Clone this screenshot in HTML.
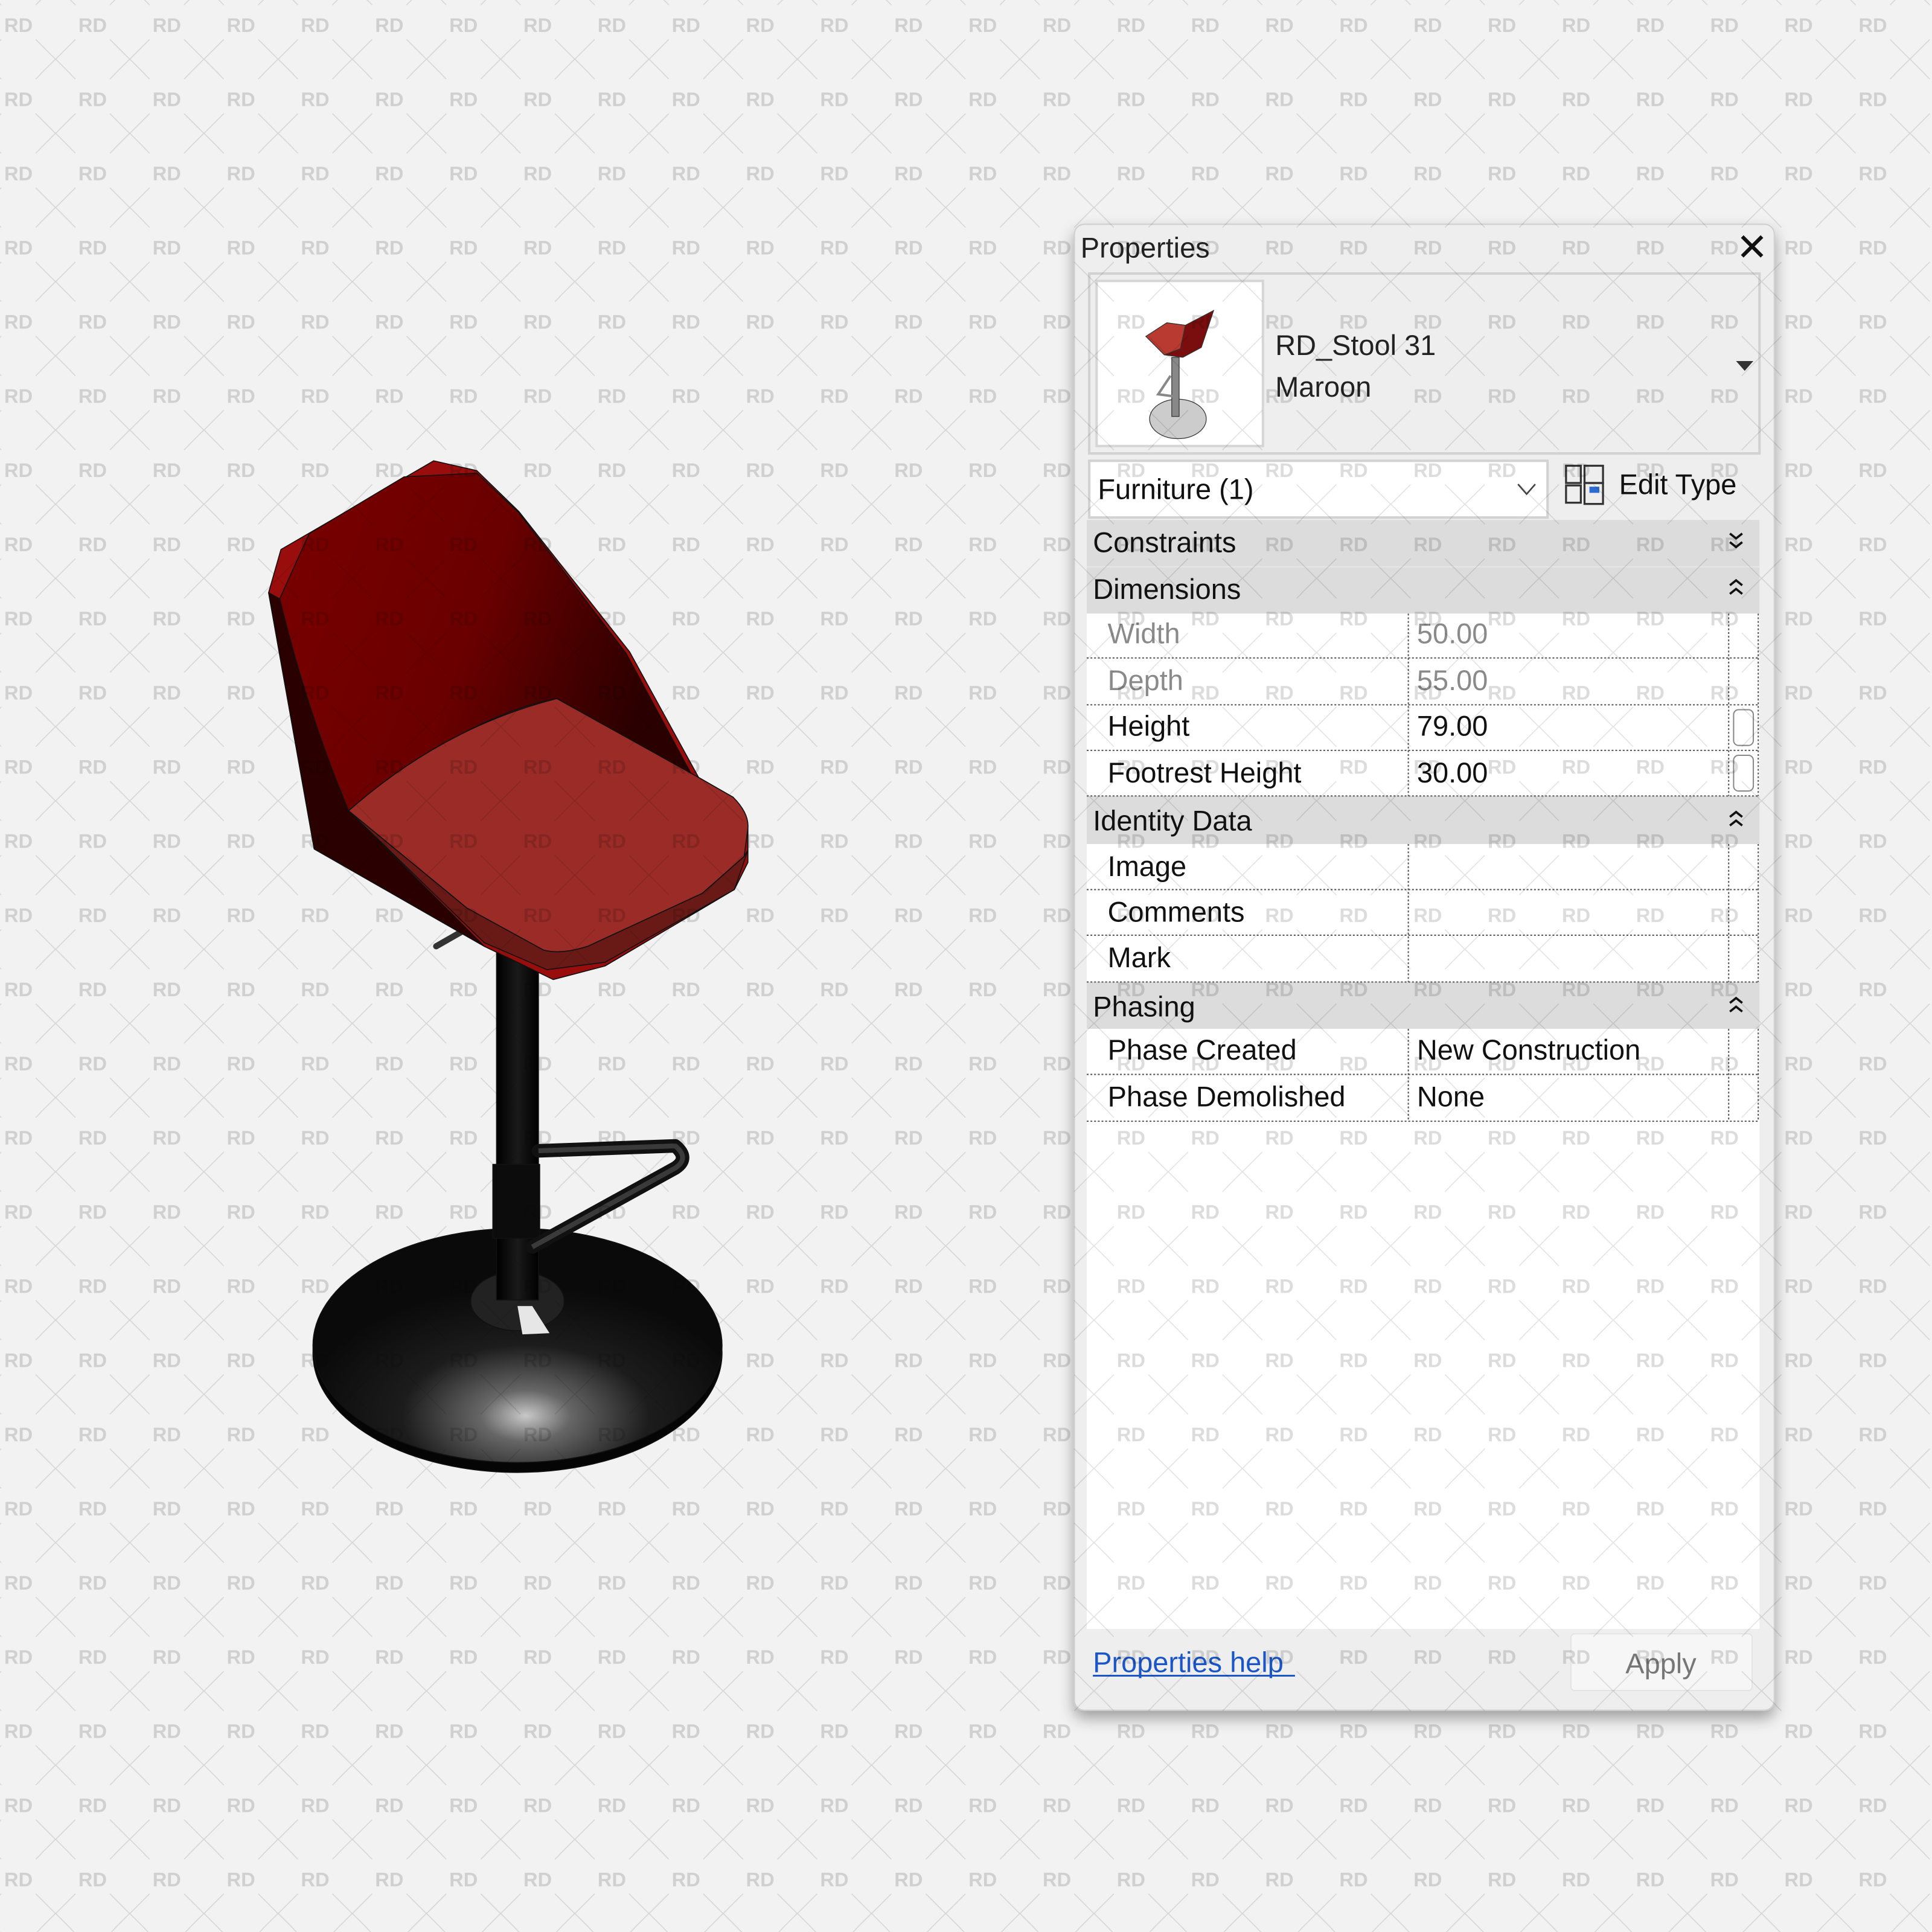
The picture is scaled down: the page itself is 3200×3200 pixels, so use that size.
<!DOCTYPE html>
<html><head><meta charset="utf-8"><style>
html,body{margin:0;padding:0;background:#f2f2f2;}
svg{display:block;}
text{font-family:"Liberation Sans","DejaVu Sans",sans-serif;}
</style></head><body>
<svg width="3200" height="3200" viewBox="0 0 3200 3200" xmlns="http://www.w3.org/2000/svg">
<defs>
<pattern id="wm" x="-15" y="0" width="60.2" height="60.2" patternUnits="userSpaceOnUse">
<text x="30" y="26" font-size="16" font-weight="bold" fill="#dcdcdc" text-anchor="middle">RD</text>
<g stroke="#e3e3e3" stroke-width="0.8">
<line x1="-16" y1="32" x2="16" y2="64"/><line x1="16" y1="32" x2="-16" y2="64"/>
<line x1="44" y1="32" x2="76" y2="64"/><line x1="76" y1="32" x2="44" y2="64"/>
<line x1="-16" y1="-28" x2="16" y2="4"/><line x1="16" y1="-28" x2="-16" y2="4"/>
<line x1="44" y1="-28" x2="76" y2="4"/><line x1="76" y1="-28" x2="44" y2="4"/>
</g>
</pattern>
<linearGradient id="shell" x1="0" y1="0" x2="1" y2="0.3"><stop offset="0" stop-color="#7a0000"/><stop offset="0.55" stop-color="#6a0000"/><stop offset="1" stop-color="#2a0000"/></linearGradient>
<linearGradient id="col" x1="0" x2="1"><stop offset="0" stop-color="#000"/><stop offset="0.5" stop-color="#1a1a1a"/><stop offset="1" stop-color="#000"/></linearGradient>
<radialGradient id="base" cx="0.52" cy="0.8" r="0.55"><stop offset="0" stop-color="#c8c8c8"/><stop offset="0.2" stop-color="#666"/><stop offset="0.55" stop-color="#1c1c1c"/><stop offset="1" stop-color="#0a0a0a"/></radialGradient>
<filter id="sh" x="-10%" y="-10%" width="120%" height="120%"><feDropShadow dx="0" dy="6" stdDeviation="6" flood-color="#000" flood-opacity="0.35"/></filter>
</defs>
<rect width="3200" height="3200" fill="#f2f2f2"/>
<g transform="scale(2.0408)">
<!-- stool -->
<g stroke="#111" stroke-width="0.8" stroke-linejoin="round">
<ellipse cx="420" cy="1098" rx="166" ry="97" fill="#050505"/>
<ellipse cx="420" cy="1092" rx="166" ry="95" fill="url(#base)"/>
<ellipse cx="420" cy="1056" rx="38" ry="24" fill="#222"/>
<path d="M420 1060 L432 1060 L446 1082 L424 1083 Z" fill="#e6e6e6" stroke="none"/>
<rect x="403" y="770" width="34" height="285" fill="url(#col)"/>
<rect x="400" y="945" width="38" height="60" fill="#0c0c0c"/>
<path d="M437 934 L548 930 Q560 940 548 948 L432 1012" fill="none" stroke="#111" stroke-width="11" stroke-linecap="round"/>
<path d="M437 934 L548 930 Q560 940 548 948 L432 1012" fill="none" stroke="#3a3a3a" stroke-width="4"/>
<line x1="354" y1="768" x2="375" y2="756" stroke="#333" stroke-width="5" stroke-linecap="round"/>
<!-- shell outer -->
<path d="M218 481 L228 446 L352 374 L387 382 L421 415 L511 529 L567 631 L595 647 L607 672 L607 700 L596 722 L491 784 L449 795 L393 768 L255 689 Z" fill="#9a0d0d"/>
<path d="M218 481 L227 486 L283 658 L393 768 L255 689 Z" fill="#2a0000"/>
<!-- inner back -->
<path d="M251 433 L328 387 L387 384 L421 416 L508 530 L562 630 L452 567 Q380 580 283 658 Q250 580 227 486 Z" fill="url(#shell)"/>
<!-- seat front -->
<path d="M283 658 L393 765 L444 787 L491 781 L596 722 L607 690 L604 695 L570 725 L477 768 L441 771 L379 737 Z" fill="#6a1a16"/>
<!-- seat top -->
<path d="M283 658 Q360 590 452 567 L567 631 L595 647 Q608 660 607 672 L604 695 L570 725 L477 768 Q455 775 441 771 L379 737 Z" fill="#9a2b26"/>
</g>
<!-- panel -->
<g filter="url(#sh)"><rect x="872" y="182" width="568" height="1206" rx="8" fill="#eeeeee" stroke="#cfcfcf"/></g>
<text x="877" y="209" font-size="23" fill="#222">Properties</text>
<path d="M1414 192 L1430 208 M1430 192 L1414 208" stroke="#111" stroke-width="3"/>
<rect x="884" y="222" width="544" height="146" fill="#eeeeee" stroke="#d2d2d2" stroke-width="2"/>
<rect x="890" y="228" width="135" height="134" fill="#fff" stroke="#d6d6d6" stroke-width="2"/>
<!-- thumb stool -->
<g stroke="#333" stroke-width="0.6">
<ellipse cx="956" cy="340" rx="23" ry="16" fill="#ccc"/>
<path d="M951 290 L957 290 L957 338 L951 338 Z" fill="#888"/>
<path d="M950 305 L940 320 L955 322" fill="none" stroke="#888" stroke-width="2"/>
<path d="M930 273 L947 262 L962 264 L985 252 L975 282 L960 290 L945 288 Z" fill="#7a0d0d"/>
<path d="M930 273 L947 262 L962 264 L958 283 L945 288 Z" fill="#b83a30"/>
</g>
<text x="1035" y="288" font-size="23" fill="#222">RD_Stool 31</text>
<text x="1035" y="322" font-size="23" fill="#222">Maroon</text>
<path d="M1409 293 L1423 293 L1416 301 Z" fill="#333"/>
<rect x="884" y="374" width="372" height="46" fill="#fff" stroke="#d2d2d2" stroke-width="2"/>
<text x="891" y="405" font-size="23" fill="#111">Furniture (1)</text>
<path d="M1232 393 L1239 401 L1246 393" fill="none" stroke="#444" stroke-width="1.3"/>
<g fill="none" stroke="#333" stroke-width="1.6"><rect x="1271" y="378" width="12" height="14"/><rect x="1271" y="394" width="12" height="14"/><rect x="1286" y="378" width="15" height="14"/><rect x="1286" y="392" width="15" height="17"/></g>
<rect x="1290" y="395" width="8" height="5" fill="#2c6bd0"/>
<text x="1314" y="401" font-size="23" fill="#111">Edit Type</text>
<!-- grid -->
<rect x="882" y="422" width="546" height="76" fill="#dcdcdc"/>
<line x1="882" y1="460" x2="1428" y2="460" stroke="#e6e6e6"/>
<text x="887" y="448" font-size="23" fill="#111">Constraints</text>
<text x="887" y="486" font-size="23" fill="#111">Dimensions</text>
<rect x="882" y="498" width="546" height="148" fill="#fff"/>
<rect x="882" y="646" width="546" height="39" fill="#dcdcdc"/>
<text x="887" y="674" font-size="23" fill="#111">Identity Data</text>
<rect x="882" y="685" width="546" height="112" fill="#fff"/>
<rect x="882" y="797" width="546" height="38" fill="#dcdcdc"/>
<text x="887" y="825" font-size="23" fill="#111">Phasing</text>
<rect x="882" y="835" width="546" height="487" fill="#fff"/>
<g fill="none" stroke="#111" stroke-width="1.8">
<path d="M1404 433 L1409 437 L1414 433 M1404 440 L1409 444 L1414 440"/>
<path d="M1404 475 L1409 471 L1414 475 M1404 482 L1409 478 L1414 482"/>
<path d="M1404 663 L1409 659 L1414 663 M1404 670 L1409 666 L1414 670"/>
<path d="M1404 814 L1409 810 L1414 814 M1404 821 L1409 817 L1414 821"/>
</g>
<g stroke="#555" stroke-width="1" stroke-dasharray="1.5,1.5">
<line x1="882" y1="534" x2="1428" y2="534"/><line x1="882" y1="572" x2="1428" y2="572"/><line x1="882" y1="609" x2="1428" y2="609"/><line x1="882" y1="646" x2="1428" y2="646"/>
<line x1="882" y1="722" x2="1428" y2="722"/><line x1="882" y1="759" x2="1428" y2="759"/><line x1="882" y1="797" x2="1428" y2="797"/>
<line x1="882" y1="872" x2="1428" y2="872"/><line x1="882" y1="910" x2="1428" y2="910"/>
<line x1="1143" y1="498" x2="1143" y2="646"/><line x1="1403" y1="498" x2="1403" y2="646"/><line x1="1427" y1="498" x2="1427" y2="646"/>
<line x1="1143" y1="685" x2="1143" y2="797"/><line x1="1403" y1="685" x2="1403" y2="797"/><line x1="1427" y1="685" x2="1427" y2="797"/>
<line x1="1143" y1="835" x2="1143" y2="910"/><line x1="1403" y1="835" x2="1403" y2="910"/><line x1="1427" y1="835" x2="1427" y2="910"/>
</g>
<rect x="1407" y="576" width="16" height="29" rx="4" fill="#fff" stroke="#888"/>
<rect x="1407" y="613" width="16" height="29" rx="4" fill="#fff" stroke="#888"/>
<g font-size="23">
<text x="899" y="522" fill="#8a8a8a">Width</text><text x="1150" y="522" fill="#8a8a8a">50.00</text>
<text x="899" y="560" fill="#8a8a8a">Depth</text><text x="1150" y="560" fill="#8a8a8a">55.00</text>
<text x="899" y="597" fill="#111">Height</text><text x="1150" y="597" fill="#111">79.00</text>
<text x="899" y="635" fill="#111">Footrest Height</text><text x="1150" y="635" fill="#111">30.00</text>
<text x="899" y="711" fill="#111">Image</text>
<text x="899" y="748" fill="#111">Comments</text>
<text x="899" y="785" fill="#111">Mark</text>
<text x="899" y="860" fill="#111">Phase Created</text><text x="1150" y="860" fill="#111">New Construction</text>
<text x="899" y="898" fill="#111">Phase Demolished</text><text x="1150" y="898" fill="#111">None</text>
</g>
<text x="887" y="1357" font-size="23" fill="#1a56c8">Properties help</text>
<line x1="887" y1="1360" x2="1051" y2="1360" stroke="#1a56c8" stroke-width="1.5"/>
<rect x="1275" y="1326" width="147" height="46" rx="3" fill="#f6f6f6" stroke="#e4e4e4"/>
<text x="1348" y="1358" font-size="23" fill="#777" text-anchor="middle">Apply</text>
<!-- watermark overlay -->
<rect x="0" y="0" width="1568" height="1568" fill="url(#wm)" style="mix-blend-mode:multiply"/>
</g>
</svg>
</body></html>
